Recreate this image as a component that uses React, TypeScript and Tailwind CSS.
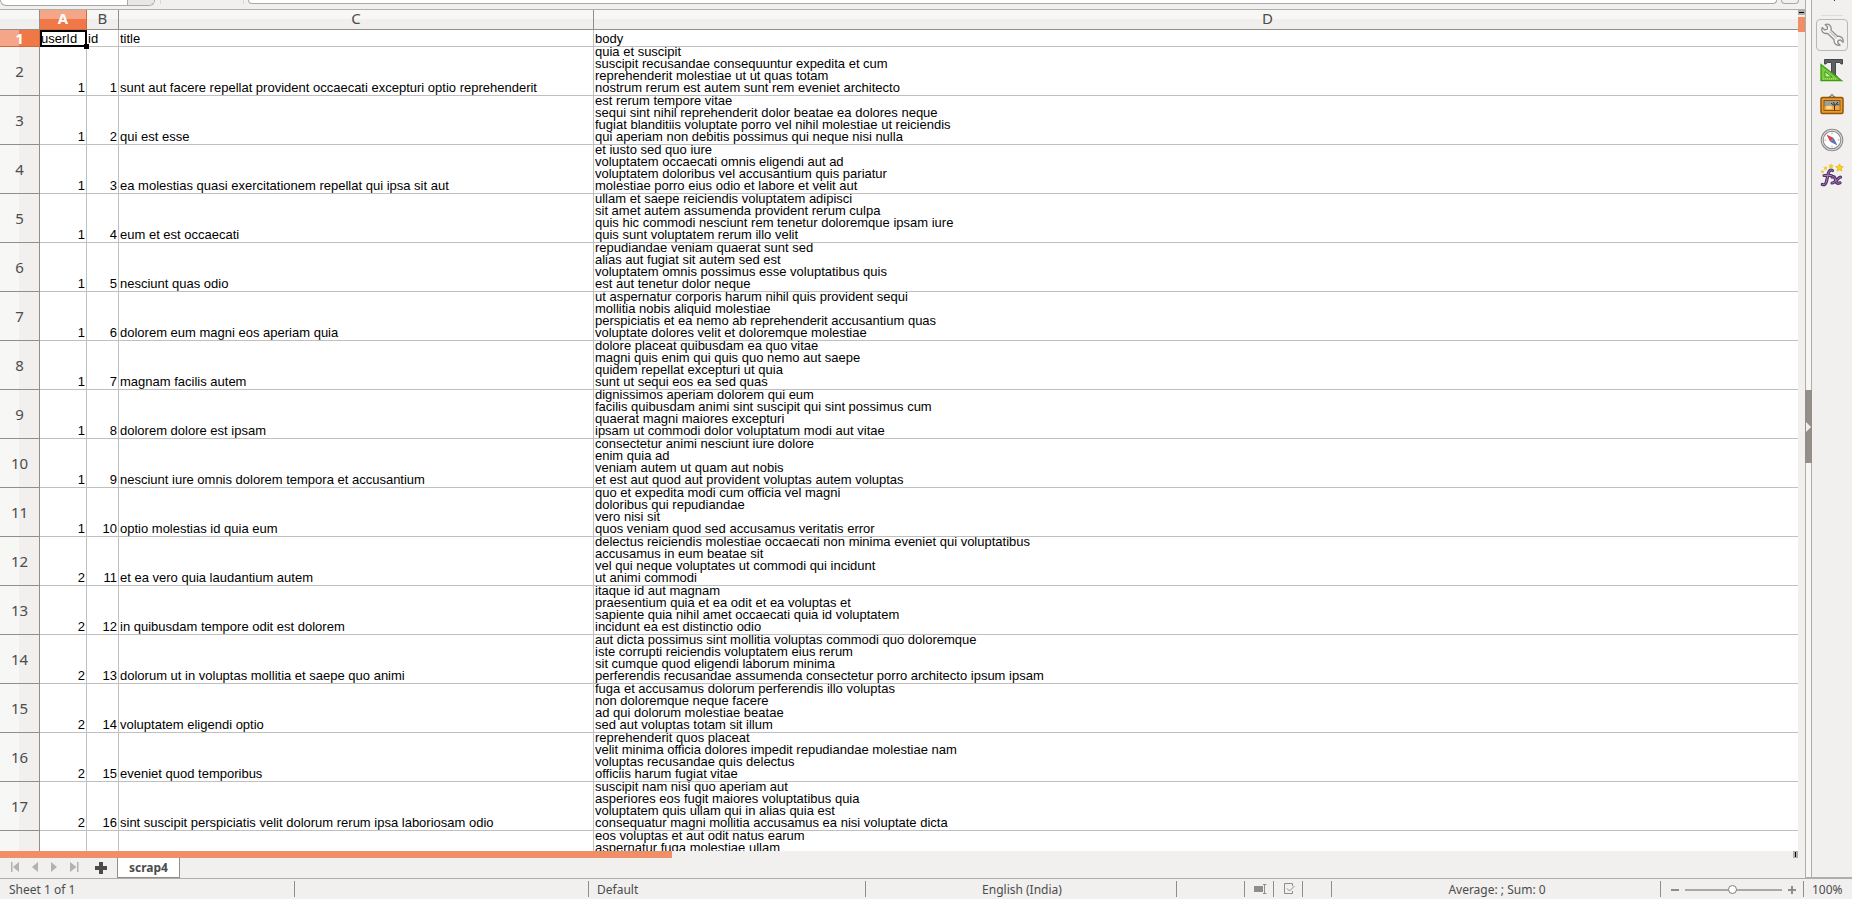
import React from "react";

type Post = { userId: number; id: number; title: string; body: string[] };

const posts: Post[] = [
  { userId: 1, id: 1, title: "sunt aut facere repellat provident occaecati excepturi optio reprehenderit", body: ["quia et suscipit", "suscipit recusandae consequuntur expedita et cum", "reprehenderit molestiae ut ut quas totam", "nostrum rerum est autem sunt rem eveniet architecto"] },
  { userId: 1, id: 2, title: "qui est esse", body: ["est rerum tempore vitae", "sequi sint nihil reprehenderit dolor beatae ea dolores neque", "fugiat blanditiis voluptate porro vel nihil molestiae ut reiciendis", "qui aperiam non debitis possimus qui neque nisi nulla"] },
  { userId: 1, id: 3, title: "ea molestias quasi exercitationem repellat qui ipsa sit aut", body: ["et iusto sed quo iure", "voluptatem occaecati omnis eligendi aut ad", "voluptatem doloribus vel accusantium quis pariatur", "molestiae porro eius odio et labore et velit aut"] },
  { userId: 1, id: 4, title: "eum et est occaecati", body: ["ullam et saepe reiciendis voluptatem adipisci", "sit amet autem assumenda provident rerum culpa", "quis hic commodi nesciunt rem tenetur doloremque ipsam iure", "quis sunt voluptatem rerum illo velit"] },
  { userId: 1, id: 5, title: "nesciunt quas odio", body: ["repudiandae veniam quaerat sunt sed", "alias aut fugiat sit autem sed est", "voluptatem omnis possimus esse voluptatibus quis", "est aut tenetur dolor neque"] },
  { userId: 1, id: 6, title: "dolorem eum magni eos aperiam quia", body: ["ut aspernatur corporis harum nihil quis provident sequi", "mollitia nobis aliquid molestiae", "perspiciatis et ea nemo ab reprehenderit accusantium quas", "voluptate dolores velit et doloremque molestiae"] },
  { userId: 1, id: 7, title: "magnam facilis autem", body: ["dolore placeat quibusdam ea quo vitae", "magni quis enim qui quis quo nemo aut saepe", "quidem repellat excepturi ut quia", "sunt ut sequi eos ea sed quas"] },
  { userId: 1, id: 8, title: "dolorem dolore est ipsam", body: ["dignissimos aperiam dolorem qui eum", "facilis quibusdam animi sint suscipit qui sint possimus cum", "quaerat magni maiores excepturi", "ipsam ut commodi dolor voluptatum modi aut vitae"] },
  { userId: 1, id: 9, title: "nesciunt iure omnis dolorem tempora et accusantium", body: ["consectetur animi nesciunt iure dolore", "enim quia ad", "veniam autem ut quam aut nobis", "et est aut quod aut provident voluptas autem voluptas"] },
  { userId: 1, id: 10, title: "optio molestias id quia eum", body: ["quo et expedita modi cum officia vel magni", "doloribus qui repudiandae", "vero nisi sit", "quos veniam quod sed accusamus veritatis error"] },
  { userId: 2, id: 11, title: "et ea vero quia laudantium autem", body: ["delectus reiciendis molestiae occaecati non minima eveniet qui voluptatibus", "accusamus in eum beatae sit", "vel qui neque voluptates ut commodi qui incidunt", "ut animi commodi"] },
  { userId: 2, id: 12, title: "in quibusdam tempore odit est dolorem", body: ["itaque id aut magnam", "praesentium quia et ea odit et ea voluptas et", "sapiente quia nihil amet occaecati quia id voluptatem", "incidunt ea est distinctio odio"] },
  { userId: 2, id: 13, title: "dolorum ut in voluptas mollitia et saepe quo animi", body: ["aut dicta possimus sint mollitia voluptas commodi quo doloremque", "iste corrupti reiciendis voluptatem eius rerum", "sit cumque quod eligendi laborum minima", "perferendis recusandae assumenda consectetur porro architecto ipsum ipsam"] },
  { userId: 2, id: 14, title: "voluptatem eligendi optio", body: ["fuga et accusamus dolorum perferendis illo voluptas", "non doloremque neque facere", "ad qui dolorum molestiae beatae", "sed aut voluptas totam sit illum"] },
  { userId: 2, id: 15, title: "eveniet quod temporibus", body: ["reprehenderit quos placeat", "velit minima officia dolores impedit repudiandae molestiae nam", "voluptas recusandae quis delectus", "officiis harum fugiat vitae"] },
  { userId: 2, id: 16, title: "sint suscipit perspiciatis velit dolorum rerum ipsa laboriosam odio", body: ["suscipit nam nisi quo aperiam aut", "asperiores eos fugit maiores voluptatibus quia", "voluptatem quis ullam qui in alias quia est", "consequatur magni mollitia accusamus ea nisi voluptate dicta"] },
];

const colHead = "h-5 border-r border-b border-[#938f88] bg-linear-to-b from-[#f7f7f6] from-50% to-[#f0efee] to-50% p-0 text-center align-top font-normal leading-4";
const rowHead = "border-r border-b border-[#938f88] bg-linear-to-r from-[#f7f7f6] from-50% to-[#f1f0ef] to-50% p-0 text-center align-middle font-normal";
const cell = "border-r border-b border-[#c0c0c0] p-0 pb-px align-bottom";
const lastCell = "border-b border-[#c0c0c0] p-0 pb-px pl-px align-bottom whitespace-nowrap";

function Sheet() {
  return (
    <table className="w-[calc(100%+144px)] table-fixed border-separate border-spacing-0 bg-white text-[13px] leading-3 text-black">
      <colgroup>
        <col className="w-10" />
        <col className="w-[47px]" />
        <col className="w-8" />
        <col className="w-[475px]" />
        <col />
      </colgroup>
      <thead className="font-['Noto_Sans'] text-[15px] text-[#4c4c4c]">
        <tr>
          <td className={colHead} />
          <th scope="col" className="h-5 border-r border-b border-[#d2693e] bg-linear-to-b from-[#f6a688] from-50% to-[#f07746] to-50% p-0 text-center align-top leading-4 font-bold text-white">A</th>
          <th scope="col" className={colHead}>B</th>
          <th scope="col" className={colHead}>C</th>
          <th scope="col" className={colHead}>D</th>
        </tr>
      </thead>
      <tbody>
        <tr className="h-[17px]">
          <th scope="row" className="border-r border-b border-[#d2693e] bg-linear-to-r from-[#f6a688] from-50% to-[#f07746] to-50% p-0 text-center align-middle font-['Noto_Sans'] text-[15px] font-bold text-white">1</th>
          <td className={cell + " relative pl-px"}>
            userId
            <span className="absolute top-0 -right-px -bottom-px left-0 border-2 border-black" />
            <span className="absolute -right-[3px] -bottom-[3px] size-[5px] bg-black" />
          </td>
          <td className={cell + " pl-px"}>id</td>
          <td className={cell + " pl-px"}>title</td>
          <td className={lastCell}>body</td>
        </tr>
        {posts.map((p) => (
          <tr key={p.id} className="h-[49px]">
            <th scope="row" className={rowHead + " font-['Noto_Sans'] text-[15px] text-[#4c4c4c]"}>{p.id + 1}</th>
            <td className={cell + " pr-px text-right"}>{p.userId}</td>
            <td className={cell + " pr-px text-right"}>{p.id}</td>
            <td className={cell + " pl-px whitespace-nowrap"}>{p.title}</td>
            <td className={lastCell}>
              <div className="-mt-px">
                {p.body.map((line) => <div key={line}>{line}</div>)}
              </div>
            </td>
          </tr>
        ))}
        <tr className="h-[49px]">
          <th scope="row" aria-label="18" className={rowHead} />
          <td className={cell} />
          <td className={cell} />
          <td className={cell} />
          <td className="p-0 pl-px align-top whitespace-nowrap">
            <div className="-mt-px">
              <div>eos voluptas et aut odit natus earum</div>
              <div>aspernatur fuga molestiae ullam</div>
            </div>
          </td>
        </tr>
      </tbody>
    </table>
  );
}

function Wrench() {
  return (
    <svg viewBox="0 0 24 24" className="size-6">
      <path d="M5.2 1.6 7.6 4l-.5 2.3-2.3.6-2.6-2.3C.9 8 3.200 11.300 7.400 10.300l6.700 6.500c-.6 3.700 2.600 6.500 6 5.400l-2.400-2.500.5-2.200 2.300-.6 2.500 2.400c1-3.600-2-6.500-5.500-6L11 7.100C12 3 8.700.2 5.200 1.600Z" fill="#f4f4f3" stroke="#8d8d8b" strokeWidth="1.300" strokeLinejoin="round" />
      <path d="m9.500 8.500 7 6.800" stroke="#c4c4c2" strokeWidth="1.200" />
    </svg>
  );
}

function Styles() {
  return (
    <svg viewBox="0 0 24 24" className="size-6">
      <path d="M4.500 1.500h18v4.500h-1.500L20 4.500h-4.500V18h1.500v1.500h-7V18h1.500V4.500H7L6 6H4.500Z" fill="#5d6163" stroke="#45484a" />
      <path d="M1 6.500v16h20.500Z" fill="#7ccb3f" stroke="#3f9a12" strokeWidth="1.300" />
      <path d="M5 13.500V19h7Z" fill="#c9e8b3" stroke="#3f9a12" />
      <path d="M3 21h14" stroke="#b5eb86" strokeDasharray="1 1" />
    </svg>
  );
}

function Gallery() {
  return (
    <svg viewBox="0 0 24 24" className="size-6">
      <path d="m8 5 4-3 4 3" fill="none" stroke="#777" strokeWidth="1.300" />
      <circle cx="12" cy="2" r="1.200" fill="#999" />
      <rect x="1" y="4.500" width="22" height="16" rx="1.500" fill="#e99b2d" stroke="#925309" strokeWidth="1.500" />
      <rect x="4" y="7.500" width="16" height="10" fill="#9a9f9b" stroke="#925309" />
      <path d="M4.500 13h15v4h-15z" fill="#f2a53c" />
      <ellipse cx="9" cy="14.500" rx="3" ry="1.800" fill="#ffe27b" />
      <path d="M14.500 17.500V13l-3.500-3m3.500 3 3.500-4m-3.500 3-1-3m3 2 2 .5" stroke="#3c3023" fill="none" />
    </svg>
  );
}

function Navigator() {
  return (
    <svg viewBox="0 0 24 24" className="size-6">
      <circle cx="12" cy="12" r="9.800" fill="#fff" stroke="#858585" strokeWidth="3" />
      <circle cx="12" cy="12" r="9.800" fill="none" stroke="#d6d6d6" strokeWidth="1.200" />
      <path d="M12 4.500v2m0 11v2M4.500 12h2m11 0h2" stroke="#aaa" />
      <path d="m6.500 6.500 7.200 3.600-3.600 3.600Z" fill="#dd4142" />
      <path d="m17.500 17.500-3.800-7.400-3.600 3.600Z" fill="#5478b8" />
    </svg>
  );
}

const star = "m0-3 1 2 2.200.3-1.600 1.500.4 2.200-2-1-2 1 .4-2.200L-3.200-.7-1-1Z";

function Functions() {
  return (
    <svg viewBox="0 0 24 24" className="size-6">
      <g fill="none" stroke="#55316b" strokeWidth="3.200" strokeLinecap="round">
        <path d="M12.500 7.500c-2-1.200-3.500 0-4.200 3L6.300 19c-.6 2.500-2 3.200-4 2.500M4 12.500h7.500" />
        <path d="M12 14c2-1 2.800 0 3.600 3s1.500 4 4.400 2.800M20.500 14.200c-2.500 0-5 6-8.500 5.800" />
      </g>
      <g fill="none" stroke="#a57fba" strokeWidth="1" strokeLinecap="round">
        <path d="M12.500 7.500c-2-1.200-3.500 0-4.200 3L6.300 19c-.6 2.500-2 3.200-4 2.500M4 12.500h7.500" />
        <path d="M12 14c2-1 2.800 0 3.600 3s1.500 4 4.400 2.800M20.500 14.200c-2.500 0-5 6-8.500 5.800" />
      </g>
      <g fill="#f7d51d" stroke="#dfa90d" strokeWidth=".5">
        <path transform="translate(19.500 4.500) scale(1.200)" d={star} />
        <path transform="translate(11 3) scale(.7)" d={star} />
        <path transform="translate(5.500 5) scale(.6)" d={star} />
        <path transform="translate(2.500 8.500) scale(.5)" d={star} />
      </g>
    </svg>
  );
}

function Sidebar() {
  const btn = "flex size-8 items-center justify-center";
  return (
    <aside className="flex w-10 shrink-0 flex-col items-center border-b border-[#b0aeab] bg-[#f1f0ef]">
      <div className="mb-[3px] flex h-4 w-[22px] shrink-0 items-start justify-center border-b border-[#dddcda] pl-1">
        <span className="size-px bg-[#333]" />
      </div>
      <div className="flex flex-col gap-[3px]">
        <button aria-label="Properties" className={btn + " rounded-sm border border-[#b9b7b5]"}><Wrench /></button>
        <button aria-label="Styles" className={btn}><Styles /></button>
        <button aria-label="Gallery" className={btn}><Gallery /></button>
        <button aria-label="Navigator" className={btn}><Navigator /></button>
        <button aria-label="Functions" className={btn}><Functions /></button>
      </div>
    </aside>
  );
}

function TabBar() {
  const nav = "flex h-[18px] w-[19px] items-center justify-center";
  return (
    <nav className="flex h-5 items-start bg-[#f1f0ef] pl-[5px]">
      <div className="flex gap-px text-[#b4b2b0]">
        <button aria-label="First sheet" className={nav}><svg viewBox="0 0 10 12" className="h-3 w-2.5" fill="currentColor"><path d="M1 1h1.500v10H1zM9 1v10L3 6z" /></svg></button>
        <button aria-label="Previous sheet" className={nav}><svg viewBox="0 0 10 12" className="h-3 w-2.5" fill="currentColor"><path d="M8 1v10L2 6z" /></svg></button>
        <button aria-label="Next sheet" className={nav}><svg viewBox="0 0 10 12" className="h-3 w-2.5" fill="currentColor"><path d="M1 1v10L7 6z" /></svg></button>
        <button aria-label="Last sheet" className={nav}><svg viewBox="0 0 10 12" className="h-3 w-2.5" fill="currentColor"><path d="M7 1h1.500v10H7zM0 1v10L6.500 6z" /></svg></button>
      </div>
      <button aria-label="Add sheet" className="ml-1.5 flex h-5 w-[22px] items-center justify-center text-[#4a4a4a]">
        <svg viewBox="0 0 12 12" className="size-3" fill="currentColor"><path d="M4 0h4v4h4v4H8v4H4V8H0V4h4z" /></svg>
      </button>
      <button className="ml-[5px] h-5 w-[63px] border border-t-0 border-[#938f88] bg-white text-xs leading-4 font-bold text-[#4c4c4c]">scrap4</button>
    </nav>
  );
}

function StatusBar() {
  const sep = "my-0.5 border-r border-[#8f8d8a]";
  return (
    <footer className="flex h-[21px] shrink-0 border-t border-[#b0aeab] bg-[#f1f0ef] text-xs leading-[22px] whitespace-nowrap text-[#4c4c4c]">
      <div className="flex w-[295px]"><span className="grow pl-[9px]">Sheet 1 of 1</span><span className={sep} /></div>
      <div className="flex w-[294px]"><span className="grow" /><span className={sep} /></div>
      <div className="flex w-[277px]"><span className="grow pl-2">Default</span><span className={sep} /></div>
      <div className="flex w-[311px]"><span className="grow pl-0.5 text-center">English (India)</span><span className={sep} /></div>
      <div className="flex w-[68px] justify-end"><span className={sep} /></div>
      <div className="flex w-[29px] items-stretch justify-between pl-[9px]">
        <svg viewBox="0 0 13 20" className="h-5 w-[13px]" aria-hidden="true"><path d="M0 7h9v6H0z" fill="#8f8d8a" /><path d="M9 5.500h3.500M9 14.500h3.500M10.500 5.500v9" stroke="#8f8d8a" fill="none" /></svg>
        <span className={sep} />
      </div>
      <div className="flex w-[29px] items-stretch justify-between pl-[9px]">
        <svg viewBox="0 0 12 20" className="h-5 w-3" aria-hidden="true" fill="none" stroke="#8f8d8a"><path d="M9.500 7V4.500h-8v10h8V12M4 9.500l2.500 2.500L11.500 7" /></svg>
        <span className={sep} />
      </div>
      <div className="flex w-[29px] justify-end"><span className={sep} /></div>
      <div className="flex grow"><span className="grow pl-0.5 text-center">Average: ; Sum: 0</span><span className={sep} /></div>
      <div className="flex w-[143px]">
        <div className="flex grow items-center justify-center gap-1.5 pt-px pl-0.5 text-[#8f8d8a]">
          <button aria-label="Zoom out" className="flex w-2 items-center"><span className="h-0.5 w-2 bg-current" /></button>
          <label className="relative flex h-4 w-[97px] items-center">
            <input type="range" aria-label="Zoom" min="0" max="100" defaultValue="49" className="h-0.5 w-full appearance-none bg-[#aaa8a5] [&::-webkit-slider-thumb]:size-[9px] [&::-webkit-slider-thumb]:appearance-none [&::-webkit-slider-thumb]:rounded-full [&::-webkit-slider-thumb]:border [&::-webkit-slider-thumb]:border-[#7f7d7a] [&::-webkit-slider-thumb]:bg-white" />
          </label>
          <button aria-label="Zoom in" className="flex items-center"><svg viewBox="0 0 8 8" className="size-2" fill="currentColor"><path d="M3 0h2v3h3v2H5v3H3V5H0V3h3z" /></svg></button>
        </div>
        <span className={sep} />
      </div>
      <div className="w-12 pl-2">100%</div>
    </footer>
  );
}

export default function App() {
  return (
    <div className="flex h-screen flex-col overflow-hidden bg-[#f1f0ef] font-['Liberation_Sans',sans-serif]">
      <div className="flex min-h-0 grow">
        <main className="flex min-w-0 grow flex-col">
          <div className="flex h-[10px] shrink-0 items-start border-b border-[#b0aeab]">
            <div className="flex h-1.5 w-[155px] rounded-b-md border border-t-0 border-[#aaa8a5] bg-white"><span className="ml-auto w-[27px] rounded-br-md border-l border-[#aaa8a5] bg-[#e8e7e6]" /></div>
            <div className="mr-1 ml-[5px] h-1 w-[84px] border-x border-[#d8d7d5]" />
            <div className="h-1 grow rounded-b-md border border-t-0 border-[#aaa8a5] bg-white" />
            <div className="mr-1.5 ml-1 h-1 w-[18px] rounded-b-md border border-t-0 border-[#aaa8a5]" />
          </div>
          <div className="flex min-h-0 grow">
            <div className="min-w-0 grow overflow-hidden"><Sheet /></div>
            <div className="flex w-[7px] shrink-0 flex-col">
              <div className="flex h-[5px] items-center bg-[#b0aeab] px-px"><span className="h-px w-full bg-black" /></div>
              <div className="mt-0.5 h-[15px] bg-[#f08f67]" />
            </div>
          </div>
          <div className="flex h-[7px] shrink-0">
            <div className="w-[672px] bg-[#f08f67]" />
            <div className="mr-[7px] ml-auto flex w-[5px] justify-center bg-[#b0aeab] py-px"><span className="w-px bg-black" /></div>
          </div>
          <div className="shrink-0 font-['Noto_Sans',sans-serif]"><TabBar /></div>
        </main>
        <div className="flex w-[7px] shrink-0 items-center border border-t-0 border-[#b0aeab] bg-[#f6f6f5]">
          <button aria-label="Hide sidebar" className="-mx-px mb-6 flex h-[73px] w-[7px] shrink-0 items-center bg-[#938f88]">
            <svg viewBox="0 0 7 10" className="h-2.5 w-[7px]"><path d="M1 0v10l5-5z" fill="#f1f0ef" /></svg>
          </button>
        </div>
        <Sidebar />
      </div>
      <div className="shrink-0 font-['Noto_Sans',sans-serif]"><StatusBar /></div>
    </div>
  );
}
